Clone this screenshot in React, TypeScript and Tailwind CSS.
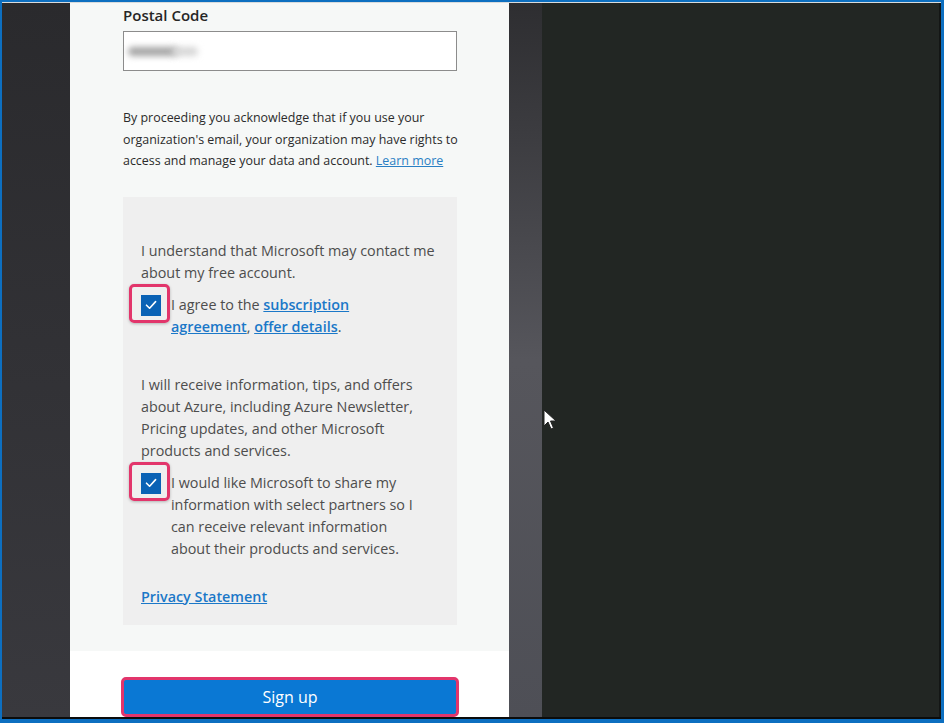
import React from "react";

function Check() {
  return (
    <svg width="14" height="14" viewBox="0 0 14 14" fill="none">
      <path d="M2.5 7.2 L5.6 10.2 L11.6 3.6" stroke="white" strokeWidth="1.6" strokeLinecap="round" strokeLinejoin="round" />
    </svg>
  );
}

function CheckRow({ children }: { children: React.ReactNode }) {
  return (
    <div className="flex items-start">
      <div className="relative mt-[1px] w-[20px] h-[21px] shrink-0 bg-[#0a62b5] flex items-center justify-center">
        <Check />
        <div className="absolute left-[-12px] top-[-11px] w-[41px] h-[39px] rounded-[5px] border-[3px] border-[#e2356b] shadow-[0_1px_3px_rgba(0,0,0,0.25)]" />
      </div>
      <div className="ml-[10px] w-[252px]">{children}</div>
    </div>
  );
}

export default function App() {
  const font = { fontFamily: '"Open Sans", "Noto Sans", Arial, sans-serif' };
  return (
    <div className="w-[944px] h-[723px] overflow-hidden bg-[#0d6fc0] pt-[2px] pl-[2px] pr-[3px] pb-[4px]" style={font}>
      <div className="w-full h-full flex flex-col bg-[#1c1e1d]">
        <div className="h-[1px] bg-[#d8dbdc] shrink-0" />
        <div className="flex-1 flex min-h-0">
          <div className="w-[68px] bg-gradient-to-b from-[#2a2a2d] to-[#39393e]" />
          <div className="w-[439px] flex flex-col">
            <div className="bg-[#f6f8f7] pl-[53px] pt-[2px] pb-[26px]">
              <div className="text-[15px] leading-[20px] font-semibold text-[#262626]">Postal Code</div>
              <div className="mt-[6px] w-[334px] h-[40px] border border-[#8c8c8c] bg-white flex items-center pl-[4px]">
                <div className="w-[50px] h-[9px] rounded-full bg-[#a4a4a4] blur-[3px]" />
                <div className="ml-[-6px] w-[26px] h-[9px] rounded-full bg-[#d6d6d6] blur-[3px]" />
              </div>
              <div className="mt-[36px] w-[340px] text-[12.45px] leading-[21.5px] text-[#2b2b2b]">
                <div>By proceeding you acknowledge that if you use your</div>
                <div>organization's email, your organization may have rights to</div>
                <div>
                  access and manage your data and account.{" "}
                  <span className="text-[#2a7fc4] underline">Learn more</span>
                </div>
              </div>
              <div className="mt-[25px] w-[334px] bg-[#efefef] pl-[18px] pr-[14px] pt-[43px] pb-[17px] text-[14.35px] leading-[22px] text-[#4d4d4d]">
                <p>I understand that Microsoft may contact me about my free account.</p>
                <div className="mt-[10px]">
                  <CheckRow>
                    I agree to the{" "}
                    <span className="text-[#1b78c8] font-semibold underline">subscription</span>{" "}
                    <span className="text-[#1b78c8] font-semibold underline">agreement</span>,{" "}
                    <span className="text-[#1b78c8] font-semibold underline">offer details</span>.
                  </CheckRow>
                </div>
                <p className="mt-[36px]">
                  I will receive information, tips, and offers about Azure, including Azure Newsletter, Pricing updates, and other Microsoft products and services.
                </p>
                <div className="mt-[10px]">
                  <CheckRow>
                    I would like Microsoft to share my information with select partners so I can receive relevant information about their products and services.
                  </CheckRow>
                </div>
                <p className="mt-[26px]">
                  <span className="text-[#1b78c8] font-semibold underline">Privacy Statement</span>
                </p>
              </div>
            </div>
            <div className="flex-1 bg-white pl-[54px] pt-[28px]">
              <div className="relative w-[332px] h-[36px] bg-[#0a78d4] rounded-[2px] flex items-center justify-center text-white text-[16px]">
                Sign up
                <div className="absolute left-[-3px] top-[-2px] right-[-3px] bottom-[-2px] rounded-[5px] border-[3px] border-[#e2356b]" />
              </div>
            </div>
          </div>
          <div className="w-[33px] bg-gradient-to-b from-[#2e2e31] via-[#56565c] to-[#4e4f56]" />
          <div className="flex-1 relative bg-[#222623] border-r-[2px] border-[#141615]">
            <svg className="absolute left-[1px] top-[406px]" width="14" height="22" viewBox="0 0 14 22">
              <path d="M1 1 L1 17 L5 13 L8 20 L10.5 19 L7.5 12 L13 12 Z" fill="white" stroke="#222" strokeWidth="1" />
            </svg>
          </div>
        </div>
        <div className="h-[2px] bg-[#0b0c0c] shrink-0" />
      </div>
    </div>
  );
}
